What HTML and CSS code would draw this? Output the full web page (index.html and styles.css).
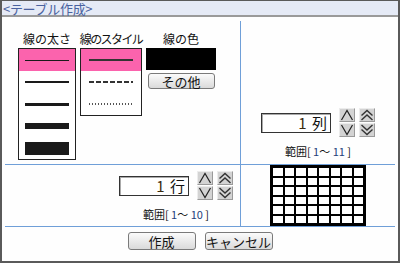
FILE: index.html
```html
<!DOCTYPE html>
<html lang="ja">
<head>
  <meta charset="UTF-8">
  <title>テーブル作成</title>
  <link rel="stylesheet" href="styles.css">
</head>
<body>
  <div class="dialog">
    <div class="title">&lt;テーブル作成&gt;</div>

    <div class="panel">
      <div class="layout">

        <!-- Line settings -->
        <div class="cell line-cell">
          <div class="col col-width">
            <div class="label">線の太さ</div>
            <ul class="picker">
              <li class="selected"><span class="line w1"></span></li>
              <li><span class="line w2"></span></li>
              <li><span class="line w3"></span></li>
              <li><span class="line w4"></span></li>
              <li><span class="line w5"></span></li>
            </ul>
          </div>
          <div class="col col-style">
            <div class="label tight">線のスタイル</div>
            <ul class="picker">
              <li class="selected"><span class="line solid"></span></li>
              <li><span class="line dashed"></span></li>
              <li><span class="line dotted"></span></li>
            </ul>
          </div>
          <div class="col col-color">
            <div class="label">線の色</div>
            <div class="swatch"></div>
            <button class="btn small">その他</button>
          </div>
        </div>

        <!-- Column count -->
        <div class="cell count-cell top">
          <div class="count">
            <div class="controls">
              <div class="num-box"><span class="num">1</span> 列</div>
              <div class="spin">
                <span class="arrow"><svg width="14" height="12" viewBox="0 0 14 12"><path d="M1.5 11 L7 1.5 L12.5 11" fill="none" stroke="#222" stroke-width="1.2"/></svg></span>
                <span class="arrow"><svg width="14" height="12" viewBox="0 0 14 12"><path d="M1.5 1 L7 10.5 L12.5 1" fill="none" stroke="#222" stroke-width="1.2"/></svg></span>
              </div>
              <div class="spin">
                <span class="arrow"><svg width="14" height="12" viewBox="0 0 14 12"><path d="M1.5 6.5 L7 1.5 L12.5 6.5 M1.5 11 L7 6 L12.5 11" fill="none" stroke="#333" stroke-width="1.4"/></svg></span>
                <span class="arrow"><svg width="14" height="12" viewBox="0 0 14 12"><path d="M1.5 1 L7 6 L12.5 1 M1.5 5.5 L7 10.5 L12.5 5.5" fill="none" stroke="#333" stroke-width="1.4"/></svg></span>
              </div>
            </div>
            <div class="range">範囲[ <span class="n">1</span>〜 <span class="n">11</span> ]</div>
          </div>
        </div>

        <!-- Row count -->
        <div class="cell count-cell bottom">
          <div class="count">
            <div class="controls">
              <div class="num-box"><span class="num">1</span> 行</div>
              <div class="spin">
                <span class="arrow"><svg width="14" height="12" viewBox="0 0 14 12"><path d="M1.5 11 L7 1.5 L12.5 11" fill="none" stroke="#222" stroke-width="1.2"/></svg></span>
                <span class="arrow"><svg width="14" height="12" viewBox="0 0 14 12"><path d="M1.5 1 L7 10.5 L12.5 1" fill="none" stroke="#222" stroke-width="1.2"/></svg></span>
              </div>
              <div class="spin">
                <span class="arrow"><svg width="14" height="12" viewBox="0 0 14 12"><path d="M1.5 6.5 L7 1.5 L12.5 6.5 M1.5 11 L7 6 L12.5 11" fill="none" stroke="#333" stroke-width="1.4"/></svg></span>
                <span class="arrow"><svg width="14" height="12" viewBox="0 0 14 12"><path d="M1.5 1 L7 6 L12.5 1 M1.5 5.5 L7 10.5 L12.5 5.5" fill="none" stroke="#333" stroke-width="1.4"/></svg></span>
              </div>
            </div>
            <div class="range">範囲[ <span class="n">1</span>〜 <span class="n">10</span> ]</div>
          </div>
        </div>

        <!-- Table preview -->
        <div class="cell preview-cell">
          <div class="grid">
            <i></i><i></i><i></i><i></i><i></i><i></i><i></i><i></i>
            <i></i><i></i><i></i><i></i><i></i><i></i><i></i><i></i>
            <i></i><i></i><i></i><i></i><i></i><i></i><i></i><i></i>
            <i></i><i></i><i></i><i></i><i></i><i></i><i></i><i></i>
            <i></i><i></i><i></i><i></i><i></i><i></i><i></i><i></i>
            <i></i><i></i><i></i><i></i><i></i><i></i><i></i><i></i>
          </div>
        </div>

      </div>

      <div class="actions">
        <button class="btn">作成</button>
        <button class="btn">キャンセル</button>
      </div>
    </div>
  </div>
</body>
</html>
```

FILE: styles.css
```css
* { box-sizing: border-box; }
body { margin: 0; font-family: "Noto Sans CJK JP", "Noto Sans", sans-serif; color: #111; background: #fff; }

.dialog { width: 400px; height: 263px; border: 2px solid #5a5a5a; border-top-width: 1px; background: #fefefe; }
.title {
  height: 16px; padding-left: 1px; font-size: 13px; line-height: 15px; color: #4a62a0;
  background: #e5eaf6; border-bottom: 2px solid #9a9a9a; letter-spacing: -0.3px;
}

.panel { padding: 4px 3px 0 3px; }
.layout { display: grid; grid-template-columns: 236px 154px; grid-template-rows: 144px 62px; }
.cell { border-bottom: 1px solid #6f9fd8; }
.line-cell, .count-cell.bottom { border-right: 1px solid #6f9fd8; }

/* line settings */
.line-cell { display: flex; gap: 4px; padding: 9px 0 0 13px; }
.col { display: flex; flex-direction: column; align-items: center; }
.col-width { width: 58px; }
.col-style { width: 62px; }
.col-color { width: 70px; }
.label { font-size: 12px; line-height: 17px; margin-bottom: 1px; white-space: nowrap; }
.label.tight { letter-spacing: -1.6px; }

.picker { list-style: none; margin: 0; padding: 0; width: 100%; border: 1px solid #222; background: #fff; }
.picker li { height: 22px; display: flex; align-items: center; justify-content: center; }
.picker li.selected { background: #fb63ad; }
.line { display: block; width: 44px; background: #1a1a1a; }
.w1 { height: 1px; }
.w2 { height: 2px; }
.w3 { height: 3px; }
.w4 { height: 6px; }
.w5 { height: 13px; }
.solid { height: 2px; background: #333; }
.dashed { height: 2px; background: repeating-linear-gradient(to right, #333 0 5px, transparent 5px 7px); }
.dotted { height: 2px; background: repeating-linear-gradient(to right, #555 0 1px, transparent 1px 3px); }

.swatch { width: 70px; height: 22px; background: #000; }
.btn {
  font-family: inherit; font-size: 13px; color: #111; padding: 0; height: 18px; width: 68px; line-height: 15px;
  border: 1px solid #7a7a7a; border-radius: 3px; background: linear-gradient(#fbfbfb, #dadada); cursor: pointer;
}
.btn.small { width: 67px; height: 16px; line-height: 13px; margin-top: 3px; }

/* column / row counters */
.count-cell { display: flex; }
.count-cell.top { justify-content: center; align-items: flex-end; padding-bottom: 6px; }
.count-cell.bottom { justify-content: flex-end; align-items: flex-end; padding: 0 7px 5px 0; }
.count { display: flex; flex-direction: column; align-items: center; gap: 8px; }
.controls { display: flex; align-items: center; gap: 4px; }
.num-box {
  width: 70px; height: 20px; margin-right: 4px; border: 1px solid #333; box-shadow: inset 1px 1px 0 #aaa;
  background: #fff; font-size: 15px; line-height: 18px; text-align: right; padding-right: 3px;
}
.num { color: #3a2a10; margin-right: 2px; }
.spin { display: flex; flex-direction: column; gap: 1px; }
.arrow {
  width: 16px; height: 14px; display: flex; align-items: center; justify-content: center;
  background: #d3d3d3; border: 1px solid; border-color: #ececec #9a9a9a #9a9a9a #ececec;
}
.arrow svg { display: block; }
.range { font-size: 11px; line-height: 13px; white-space: nowrap; }
.range .n { color: #24407a; }

/* preview */
.preview-cell { display: flex; justify-content: center; }
.grid {
  width: 96px; height: 61px; display: grid; grid-template-columns: repeat(8, 1fr); grid-template-rows: repeat(6, 1fr);
  gap: 2px; padding: 3px; background: #000;
}
.grid i { background: #fff; }

.actions { display: flex; justify-content: center; gap: 9px; padding-top: 5px; }
```
